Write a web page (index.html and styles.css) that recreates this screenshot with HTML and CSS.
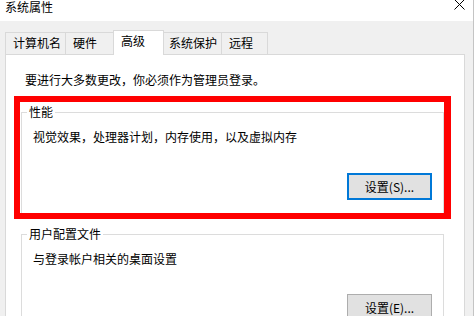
FILE: index.html
```html
<!DOCTYPE html>
<html lang="zh-CN">
<head>
<meta charset="utf-8">
<title>系统属性</title>
<link rel="stylesheet" href="styles.css">
</head>
<body>
<div class="window">
  <div class="titlebar">
    <span class="title">系统属性</span>
    <svg class="close" width="11" height="10" viewBox="0 0 11 10"><path d="M0.5 -0.5 L10.5 9.5 M10.5 -0.5 L0.5 9.5" stroke="#000" stroke-width="1" fill="none"/></svg>
  </div>
  <div class="tabs">
    <div class="tab t1">计算机名</div>
    <div class="tab t2">硬件</div>
    <div class="tab t3 selected">高级</div>
    <div class="tab t4">系统保护</div>
    <div class="tab t5">远程</div>
  </div>
  <div class="panel">
    <p class="intro">要进行大多数更改，你必须作为管理员登录。</p>
    <div class="group g1">
      <div class="legend">性能</div>
      <p class="desc">视觉效果，处理器计划，内存使用，以及虚拟内存</p>
      <button class="btn default">设置(S)...</button>
    </div>
    <div class="group g2">
      <div class="legend">用户配置文件</div>
      <p class="desc">与登录帐户相关的桌面设置</p>
      <button class="btn">设置(E)...</button>
    </div>
    <div class="highlight"></div>
  </div>
</div>
</body>
</html>
```
FILE: styles.css
```css
html, body {
  margin: 0;
  padding: 0;
}
body {
  width: 474px;
  height: 316px;
  overflow: hidden;
  background: #f0f0f0;
  font-family: "Noto Sans CJK SC", "Microsoft YaHei", sans-serif;
  font-size: 12px;
  color: #000;
}
.window {
  width: 474px;
  height: 316px;
  overflow: hidden;
  box-sizing: border-box;
  border-right: 1px solid #c4c4c4;
  background: #f0f0f0;
}
.titlebar {
  height: 21px;
  background: #fff;
  display: flex;
  justify-content: space-between;
  align-items: flex-start;
  padding: 0 8px 0 5px;
}
.title {
  line-height: 14px;
}
.close {
  display: block;
}
.tabs {
  margin-top: 9px;
  height: 24px;
  display: flex;
  align-items: flex-end;
  padding-left: 5px;
}
.tab {
  box-sizing: border-box;
  height: 22px;
  border: 1px solid #d9d9d9;
  border-bottom: none;
  background: #f0f0f0;
  padding: 2px 0 0 7px;
  line-height: 16px;
  white-space: nowrap;
}
.tab + .tab {
  margin-left: -1px;
}
.t1 { width: 61px; }
.t2 { width: 49px; }
.t3 { width: 51px; }
.t4 { width: 59px; padding-left: 5px; }
.t5 { width: 47px; }
.tab.selected {
  height: 25px;
  margin-bottom: -1px;
  background: #fff;
  position: relative;
  z-index: 1;
}
.panel {
  position: relative;
  margin: 0 8px 0 5px;
  height: 262px;
  box-sizing: border-box;
  background: #fff;
  border: 1px solid #d9d9d9;
  border-bottom: none;
  padding: 17px 20px 0 15px;
  overflow: hidden;
}
.intro {
  margin: 0 0 24px 4px;
  line-height: 16px;
}
.group {
  border: 1px solid #dcdcdc;
  display: flex;
  flex-direction: column;
  padding: 0 11px 13px 0;
}
.g2 {
  margin-top: 20px;
}
.legend {
  margin: -9px 0 0 5px;
  padding: 0 2px;
  background: #fff;
  align-self: flex-start;
  line-height: 16px;
}
.desc {
  margin: 9px 0 28px 11px;
  line-height: 16px;
}
.g2 .desc {
  margin-bottom: 27px;
}
.btn {
  align-self: flex-end;
  width: 85px;
  height: 27px;
  box-sizing: border-box;
  margin: 0;
  padding: 0;
  background: #e1e1e1;
  border: 1px solid #adadad;
  font-family: inherit;
  font-size: 12px;
  line-height: 16px;
  color: #000;
}
.btn.default {
  border: 2px solid #0078d7;
}
.highlight {
  position: absolute;
  left: 8px;
  top: 41px;
  width: 437px;
  height: 123px;
  box-sizing: border-box;
  border: 6px solid #ff0000;
  border-right-width: 7px;
}
```
